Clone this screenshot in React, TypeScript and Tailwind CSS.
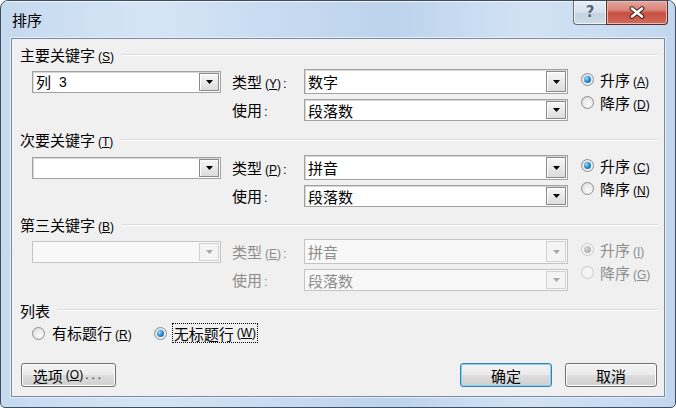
import React from 'react';

function Key({ k }: { k: string }) {
  return (
    <span className="font-['Liberation_Sans',sans-serif] text-[12px] ml-[3px]">
      (<span className="underline underline-offset-[1px]">{k}</span>)
    </span>
  );
}

function Arrow({ disabled }: { disabled?: boolean }) {
  return (
    <svg width="7" height="4" viewBox="0 0 7 4">
      <path d="M0 0H7L3.5 4Z" fill={disabled ? '#a8a8a8' : '#000'} />
    </svg>
  );
}

function Combo({ cls, text, disabled }: { cls: string; text?: React.ReactNode; disabled?: boolean }) {
  return (
    <div
      className={`${cls} flex border ${
        disabled ? 'border-[#c4c4c4] bg-[#f8f8f8]' : 'border-[#a2a2a2] bg-white shadow-[inset_1px_1px_0_#d6d6d6]'
      }`}
    >
      <div
        className={`flex-1 flex items-center pl-[3px] text-[15px] leading-none ${
          disabled ? 'text-[#8d8d8d]' : 'text-black'
        }`}
      >
        {text}
      </div>
      <div
        className={`w-[20px] my-[1px] mr-[1px] flex items-center justify-center border ${
          disabled
            ? 'border-[#d2d2d2] bg-[#f4f4f4]'
            : 'border-[#8a8a8a] bg-[linear-gradient(180deg,#f7f7f7,#dcdcdc)] shadow-[inset_1px_1px_0_#ffffff]'
        }`}
      >
        <Arrow disabled={disabled} />
      </div>
    </div>
  );
}

function Radio({ checked, disabled }: { checked?: boolean; disabled?: boolean }) {
  const ring = disabled
    ? 'border-[#c9c9c9] bg-[#f4f4f4]'
    : 'border-[#8f8f8f] bg-[radial-gradient(circle_at_60%_65%,#fbfbfb_0%,#e9e9e9_55%,#cfcfcf_100%)]';
  const dot = disabled
    ? 'bg-[radial-gradient(circle_at_35%_35%,#d8d8d8,#9a9a9a)]'
    : 'bg-[radial-gradient(circle_at_35%_35%,#9fe0ff_0%,#2f8fd8_45%,#0b4d96_100%)]';
  return (
    <div className={`w-[13px] h-[13px] shrink-0 rounded-full border ${ring} flex items-center justify-center`}>
      {checked && <div className={`w-[7px] h-[7px] rounded-full ${dot}`} />}
    </div>
  );
}

function RadioItem({
  label,
  k,
  checked,
  disabled,
}: {
  label: string;
  k: string;
  checked?: boolean;
  disabled?: boolean;
}) {
  return (
    <div className="h-[21px] flex items-center">
      <Radio checked={checked} disabled={disabled} />
      <span className={`ml-[6px] text-[15px] leading-none ${disabled ? 'text-[#8d8d8d]' : 'text-black'}`}>
        {label}
        <Key k={k} />
      </span>
    </div>
  );
}

function Header({ title, k }: { title: string; k?: string }) {
  return (
    <div className="h-[20px] flex items-center pl-[8px] pr-[6px]">
      <span className="text-[15px] leading-none text-black whitespace-nowrap">
        {title}
        {k && <Key k={k} />}
      </span>
      <div className="flex-1 ml-[8px] h-[2px] border-t border-[#d5dde4] border-b border-b-[#ffffff]" />
    </div>
  );
}

function Label({ text, k, disabled }: { text: string; k?: string; disabled?: boolean }) {
  return (
    <div className={`w-[72px] text-[15px] leading-none ${disabled ? 'text-[#8d8d8d]' : 'text-black'}`}>
      {text}
      {k && <Key k={k} />}
      <span className="font-['Liberation_Sans',sans-serif] text-[13px] ml-[2px]">:</span>
    </div>
  );
}

function Section({
  left,
  typeKey,
  typeVal,
  up,
  down,
  disabled,
}: {
  left?: React.ReactNode;
  typeKey: string;
  typeVal: string;
  up: string;
  down: string;
  disabled?: boolean;
}) {
  return (
    <div className="flex pl-[20px]">
      <div className="w-[189px] h-[25px] flex items-center">
        <Combo cls="w-[189px] h-[22px]" text={left} disabled={disabled} />
      </div>
      <div className="ml-[11px] flex flex-col gap-[5px]">
        <div className="flex items-center h-[25px]">
          <Label text="类型" k={typeKey} disabled={disabled} />
          <Combo cls="w-[264px] h-[25px]" text={typeVal} disabled={disabled} />
        </div>
        <div className="flex items-center h-[22px]">
          <Label text="使用" disabled={disabled} />
          <Combo cls="w-[264px] h-[22px]" text="段落数" disabled={disabled} />
        </div>
      </div>
      <div className="ml-[13px] flex flex-col gap-[2px]">
        <RadioItem label="升序" k={up} checked disabled={disabled} />
        <RadioItem label="降序" k={down} disabled={disabled} />
      </div>
    </div>
  );
}

function Button({ children, cls, def }: { children: React.ReactNode; cls: string; def?: boolean }) {
  return (
    <div
      className={`${cls} h-[24px] rounded-[3px] border flex items-center justify-center text-[15px] leading-none text-black bg-[linear-gradient(180deg,#f3f3f3_0%,#ebebeb_48%,#dddddd_52%,#cfcfcf_100%)] ${
        def
          ? 'border-[#3c7fb1] shadow-[inset_0_0_0_1px_#7fd3f8]'
          : 'border-[#707070] shadow-[inset_0_0_0_1px_#fcfcfc]'
      }`}
    >
      {children}
    </div>
  );
}

export default function App() {
  return (
    <div className="w-[676px] h-[408px] bg-white font-['Noto_Sans_CJK_SC','Liberation_Sans',sans-serif]">
      <div className="w-[676px] h-[408px] rounded-t-[8px] rounded-b-[5px] border border-[#3e4d60] bg-[linear-gradient(90deg,#c5d9ef_0%,#d6e5f6_22%,#c8dbf0_40%,#bcd3ec_58%,#d2e2f4_78%,#c2d7ee_100%)] flex flex-col overflow-hidden">
        {/* title bar */}
        <div className="h-[37px] flex items-start shrink-0 shadow-[inset_0_1px_0_#eef5fc]">
          <div className="self-center pl-[11px] text-[15px] leading-none text-black">排序</div>
          <div className="flex-1" />
          <div className="flex mr-[7px]">
            <div className="w-[33px] h-[24px] rounded-bl-[4px] border border-t-0 border-r-0 border-[#5f7086] bg-[linear-gradient(180deg,#e6edf5_0%,#d6e0eb_50%,#c4d1df_52%,#cfdbe8_100%)] shadow-[inset_0_0_0_1px_#f3f7fb] flex items-center justify-center">
              <span className="font-['DejaVu_Sans',sans-serif] font-bold text-[15px] leading-none text-[#56657a] [text-shadow:0_0_2px_#ffffff]">?</span>
            </div>
            <div className="w-[62px] h-[24px] rounded-br-[4px] border border-t-0 border-[#5a2b28] bg-[linear-gradient(180deg,#e4a79d_0%,#d98377_40%,#c64f40_52%,#cf6c5c_100%)] shadow-[inset_0_0_0_1px_#eab8ae] flex items-center justify-center">
              <svg width="16" height="13" viewBox="0 0 16 13">
                <path d="M3 2.5L13 10.5M13 2.5L3 10.5" stroke="#4b1d19" strokeWidth="4.6" strokeLinecap="round" />
                <path d="M3 2.5L13 10.5M13 2.5L3 10.5" stroke="#ffffff" strokeWidth="2.6" strokeLinecap="round" />
              </svg>
            </div>
          </div>
        </div>
        {/* client */}
        <div className="mx-[10px] mb-[10px] flex-1 border border-[#7a8ca3] bg-[#f0f0f0] outline outline-1 outline-[#e4eef9] flex flex-col pt-[6px]">
          <Header title="主要关键字" k="S" />
          <div className="mt-[4px]">
            <Section
              left={
                <>
                  列<span className="ml-[8px] font-['Liberation_Sans',sans-serif] text-[14px]">3</span>
                </>
              }
              typeKey="Y"
              typeVal="数字"
              up="A"
              down="D"
            />
          </div>
          <div className="mt-[9px]">
            <Header title="次要关键字" k="T" />
          </div>
          <div className="mt-[5px]">
            <Section typeKey="P" typeVal="拼音" up="C" down="N" />
          </div>
          <div className="mt-[8px]">
            <Header title="第三关键字" k="B" />
          </div>
          <div className="mt-[4px]">
            <Section typeKey="E" typeVal="拼音" up="I" down="G" disabled />
          </div>
          <div className="mt-[9px]">
            <Header title="列表" />
          </div>
          <div className="mt-[3px] h-[20px] flex items-center pl-[20px]">
            <Radio />
            <span className="ml-[7px] text-[15px] leading-none">
              有标题行
              <Key k="R" />
            </span>
            <div className="ml-[22px]">
              <Radio checked />
            </div>
            <span className="ml-[5px] h-[20px] px-[1px] flex items-center border border-dotted border-black text-[15px] leading-none">
              无标题行
              <Key k="W" />
            </span>
          </div>
          <div className="mt-[20px] flex pl-[9px] pr-[7px]">
            <Button cls="w-[95px]">
              选项
              <Key k="O" />
              <span className="font-['Liberation_Sans',sans-serif] text-[12px] tracking-[3px] ml-[2px]">...</span>
            </Button>
            <div className="flex-1" />
            <Button cls="w-[92px]" def>
              确定
            </Button>
            <Button cls="w-[92px] ml-[13px]">取消</Button>
          </div>
        </div>
      </div>
    </div>
  );
}
